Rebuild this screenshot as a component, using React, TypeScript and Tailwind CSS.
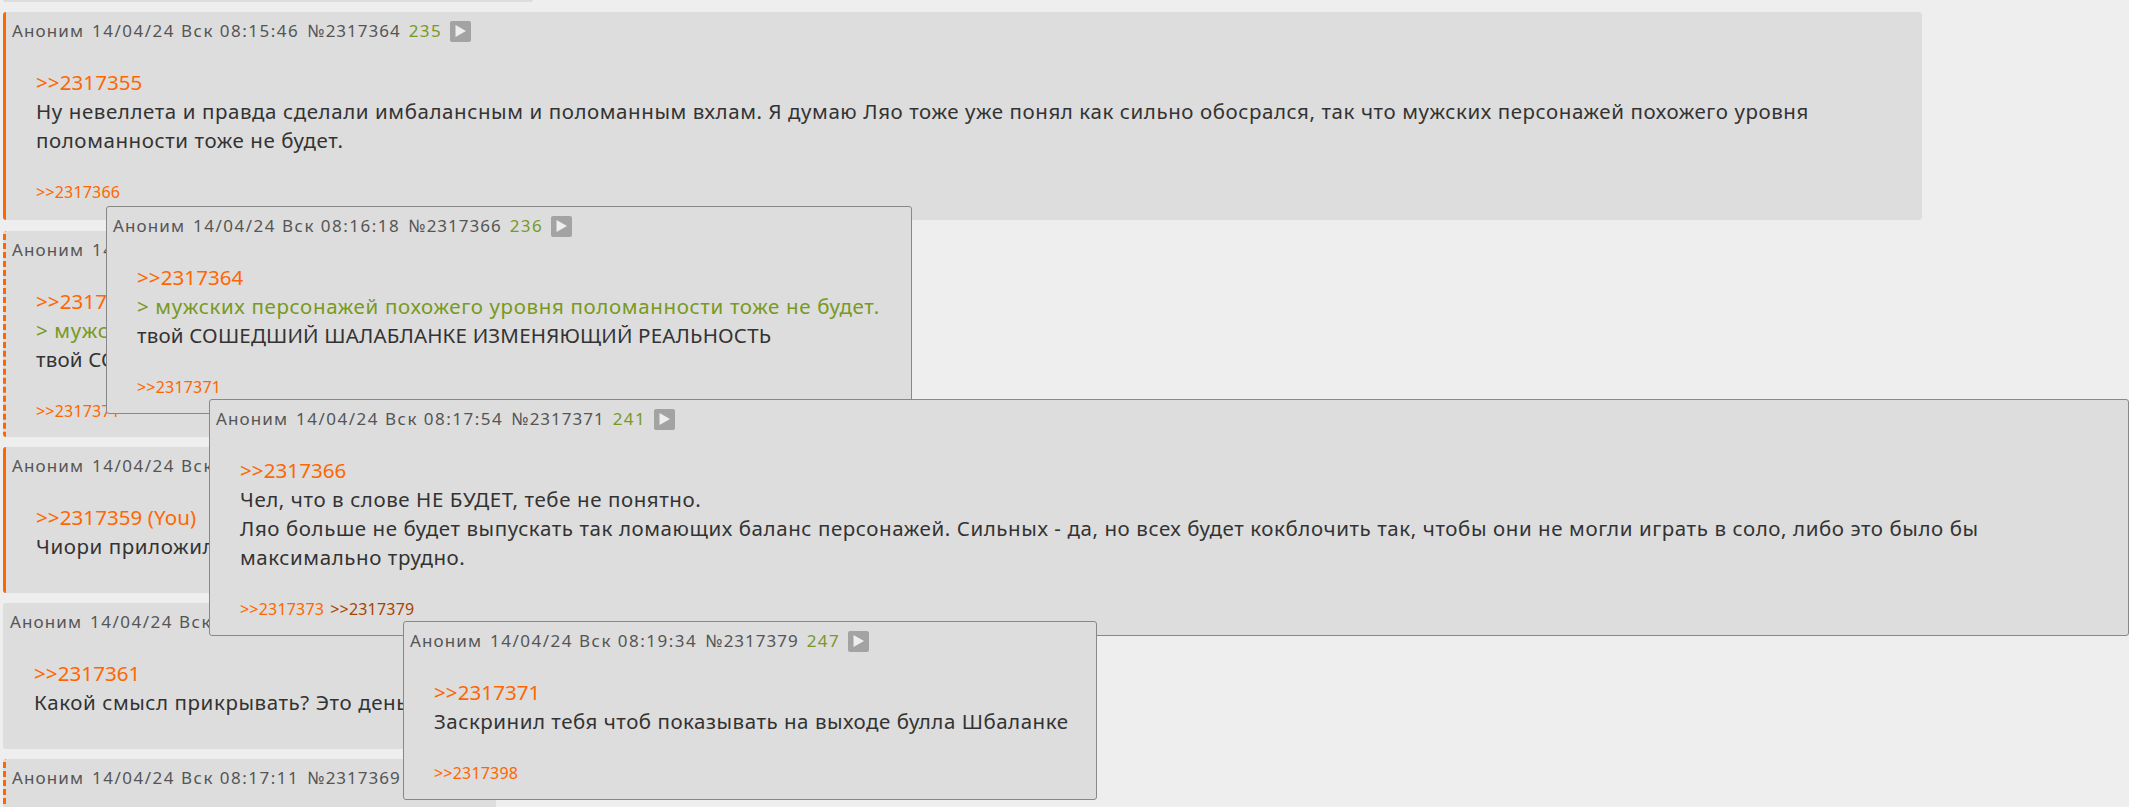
type PostProps = {
  date: string;
  num: string;
  rating: string;
  reply: string;
  you?: boolean;
  green?: string;
  lines: string[];
  lineClass?: string;
  refs?: string[];
  className?: string;
};

function Post({ date, num, rating, reply, you, green, lines, lineClass, refs, className }: PostProps) {
  return (
    <div className={className}>
      <div className="flex items-center gap-2 h-6 pl-[6px] text-[17px] text-[#555] whitespace-nowrap">
        <span className="tracking-[1.1px]">Аноним</span>
        <span className="tracking-[1.5px]">{date}</span>
        <span className="tracking-[1px]">{num}</span>
        <span className="tracking-[1.4px] text-[#789922]">{rating}</span>
        <span className="w-[21px] h-[21px] rounded-[2px] bg-[#a3a3a3] flex items-center justify-center">
          <svg width="11" height="12" viewBox="0 0 11 12">
            <path d="M0.5 0 L11 6 L0.5 12 Z" fill="#eeeeee" />
          </svg>
        </span>
      </div>
      <div className="mt-[25px] pl-[30px] pr-5 text-[20.5px] leading-[29px] tracking-[0.58px] text-[#333]">
        <div className="text-[#ff6600] tracking-[0.1px]">
          {reply}
          {you && " (You)"}
        </div>
        {green && <div className="text-[#789922] tracking-[0.65px]">{green}</div>}
        {lines.map((l) => (
          <div key={l} className={lineClass}>
            {l}
          </div>
        ))}
      </div>
      {refs ? (
        <div className="mt-[27px] mb-[17px] pl-[30px] h-5 flex gap-[6px] items-center text-[16px] tracking-[0.2px] text-[#ff6600]">
          {refs.map((r, i) => (
            <span key={r} className={i === 1 ? "text-[#a84300]" : ""}>
              {r}
            </span>
          ))}
        </div>
      ) : null}
    </div>
  );
}

const popup = "absolute z-10 bg-[#dddddd] border border-[#888] rounded-[3px] pt-[7px]";

export default function App() {
  return (
    <div
      className="relative h-[807px] overflow-hidden bg-[#eeeeee]"
      style={{ fontFamily: '"Noto Sans", "DejaVu Sans", sans-serif' }}
    >
      <div className="flex flex-col items-start gap-[10px] pl-[3px]">
        <div className="w-[530px] h-[2px] bg-[#dddddd] rounded-b-[3px]" />
        <Post
          className="w-[1919px] h-[208px] pt-[7px] bg-[#dddddd] rounded-[3px] border-l-[3px] border-[#ff6600]"
          date="14/04/24 Вск 08:15:46"
          num="№2317364"
          rating="235"
          reply=">>2317355"
          lines={[
            "Ну невеллета и правда сделали имбалансным и поломанным вхлам. Я думаю Ляо тоже уже понял как сильно обосрался, так что мужских персонажей похожего уровня",
            "поломанности тоже не будет.",
          ]}
          refs={[">>2317366"]}
        />
        <Post
          className="mt-px w-[800px] h-[206px] pt-[7px] bg-[#dddddd] rounded-[3px] border-l-[3px] border-dashed border-[#ff6600]"
          date="14/04/24 Вск 08:16:18"
          num="№2317366"
          rating="236"
          reply=">>2317364"
          green="> мужских персонажей похожего уровня поломанности тоже не будет."
          lines={["твой СОШЕДШИЙ ШАЛАБЛАНКЕ ИЗМЕНЯЮЩИЙ РЕАЛЬНОСТЬ"]}
          lineClass="tracking-[0.18px]"
          refs={[">>2317371"]}
        />
        <Post
          className="w-[800px] h-[146px] pt-[7px] bg-[#dddddd] rounded-[3px] border-l-[3px] border-[#ff6600]"
          date="14/04/24 Вск 08:16:40"
          num="№2317368"
          rating="237"
          reply=">>2317359"
          you
          lines={["Чиори приложил"]}
        />
        <Post
          className="w-[800px] h-[146px] pt-[7px] pl-px bg-[#dddddd] rounded-[3px]"
          date="14/04/24 Вск 08:16:55"
          num="№2317368"
          rating="238"
          reply=">>2317361"
          lines={["Какой смысл прикрывать? Это день"]}
        />
        <Post
          className="w-[493px] h-[100px] pt-[7px] bg-[#dddddd] rounded-[3px] border-l-[3px] border-dashed border-[#ff6600]"
          date="14/04/24 Вск 08:17:11"
          num="№2317369"
          rating="240"
          reply=">>2317364"
          lines={[]}
        />
      </div>

      <Post
        className={`${popup} left-[106px] top-[206px] w-[806px] h-[208px]`}
        date="14/04/24 Вск 08:16:18"
        num="№2317366"
        rating="236"
        reply=">>2317364"
        green="> мужских персонажей похожего уровня поломанности тоже не будет."
        lines={["твой СОШЕДШИЙ ШАЛАБЛАНКЕ ИЗМЕНЯЮЩИЙ РЕАЛЬНОСТЬ"]}
        lineClass="tracking-[0.18px]"
        refs={[">>2317371"]}
      />
      <Post
        className={`${popup} left-[209px] top-[399px] w-[1920px] h-[237px]`}
        date="14/04/24 Вск 08:17:54"
        num="№2317371"
        rating="241"
        reply=">>2317366"
        lines={[
          "Чел, что в слове НЕ БУДЕТ, тебе не понятно.",
          "Ляо больше не будет выпускать так ломающих баланс персонажей. Сильных - да, но всех будет кокблочить так, чтобы они не могли играть в соло, либо это было бы",
          "максимально трудно.",
        ]}
        refs={[">>2317373", ">>2317379"]}
      />
      <Post
        className={`${popup} left-[403px] top-[621px] w-[694px] h-[179px]`}
        date="14/04/24 Вск 08:19:34"
        num="№2317379"
        rating="247"
        reply=">>2317371"
        lines={["Заскринил тебя чтоб показывать на выходе булла Шбаланке"]}
        lineClass="tracking-[0.52px]"
        refs={[">>2317398"]}
      />
    </div>
  );
}
